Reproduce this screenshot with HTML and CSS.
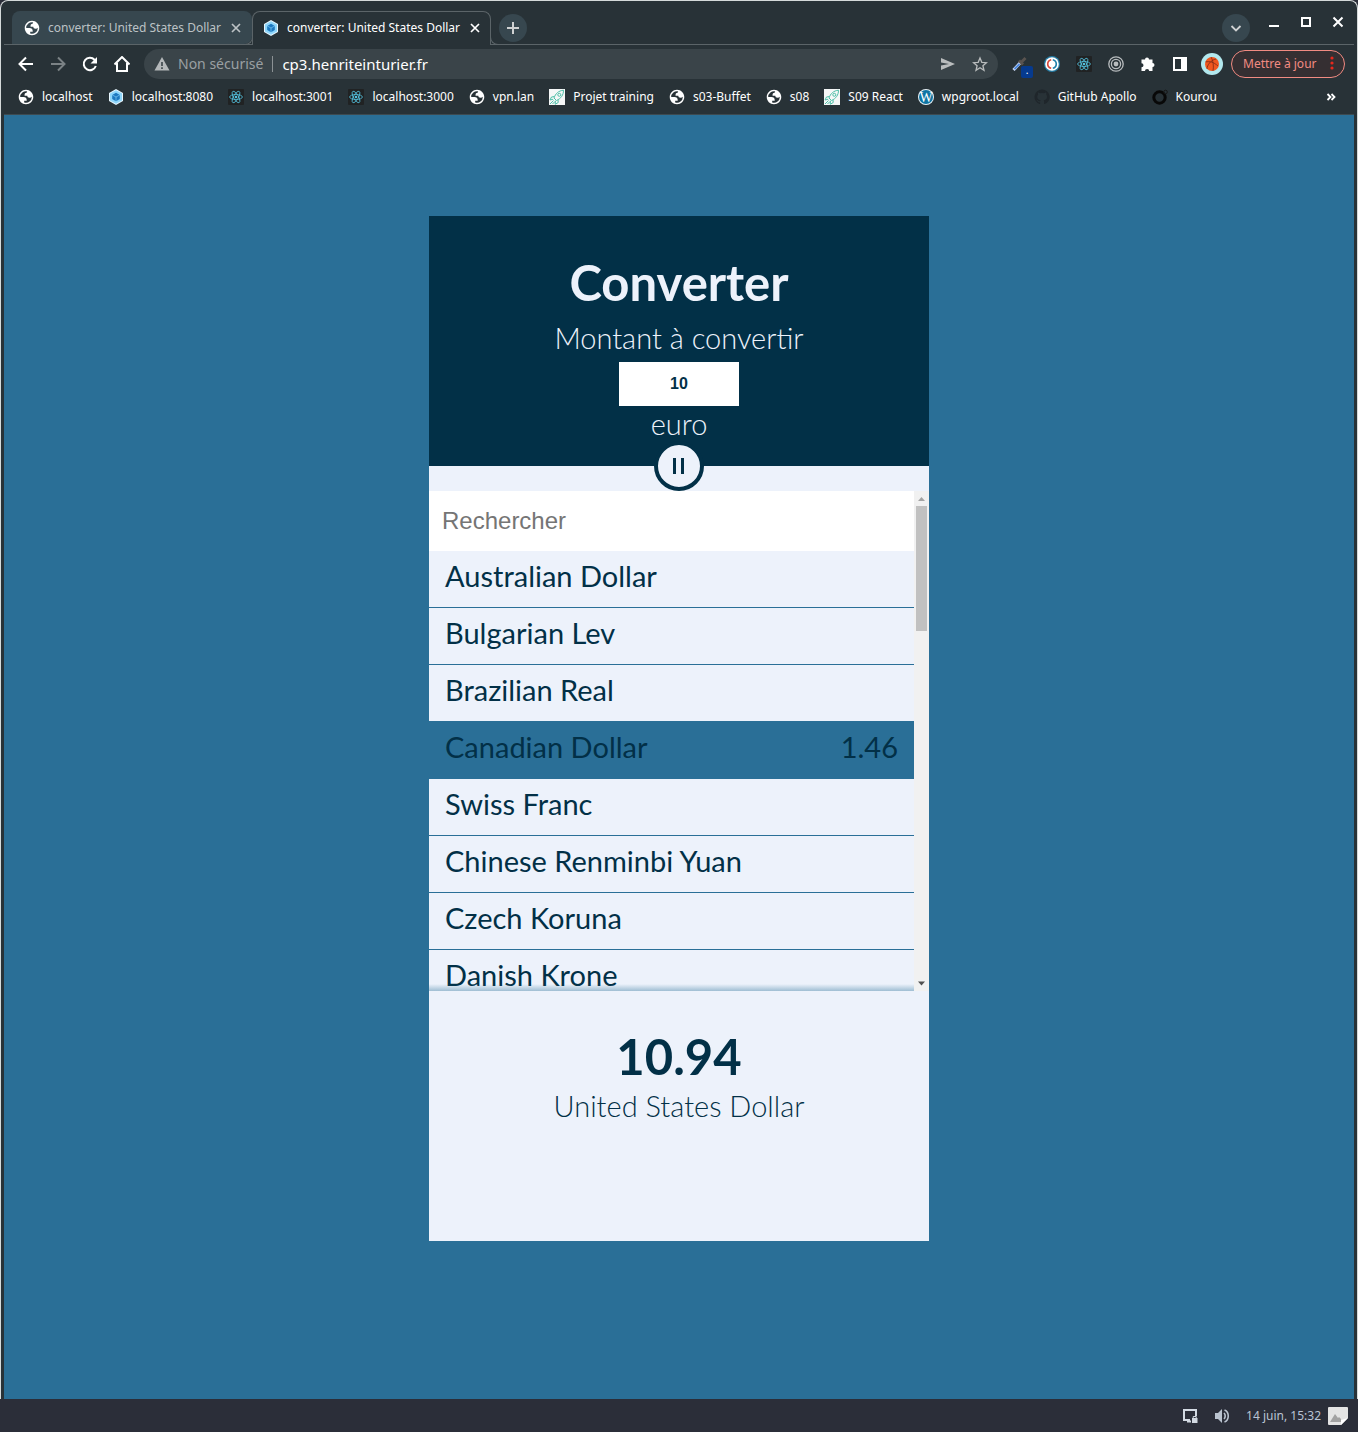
FILE: index.html
```html
<!DOCTYPE html>
<html lang="fr">
<head>
<meta charset="utf-8">
<meta name="viewport" content="width=device-width, initial-scale=1">
<title>converter: United States Dollar</title>
<link rel="stylesheet" href="styles.css">
</head>
<body>
<svg class="defs" aria-hidden="true">
  <symbol id="globe" viewBox="1 1 22 22">
    <path d="M12 2C6.480 2 2 6.480 2 12s4.480 10 10 10 10-4.480 10-10S17.520 2 12 2zM4 12h4.400c3.407.022 4.922 1.730 4.543 5.127H9.488v2.470a8.004 8.004 0 0 0 10.498-8.083C19.327 12.504 18.332 13 17 13c-2.137 0-3.206-.916-3.206-2.750h-3.748c-.274-2.728.683-4.092 2.870-4.092 0-.975.327-1.597.811-1.970A8.004 8.004 0 0 0 4 12z" fill="#fff" fill-rule="evenodd"/>
  </symbol>
  <symbol id="webpack" viewBox="0 0 16 16">
    <path d="M8 0l7 4v8l-7 4-7-4V4z" fill="#e8f6fd"/>
    <path d="M8 1.200l6 3.400v6.800l-6 3.400-6-3.400V4.600z" fill="#8ed6fb"/>
    <path d="M8 3.800l3.800 2.100v4.200L8 12.200l-3.800-2.100V5.900z" fill="#1c78c0"/>
    <path d="M4.200 5.900L8 8l3.800-2.100M8 8v4.200" fill="none" stroke="#8ed6fb" stroke-width=".6"/>
  </symbol>
  <symbol id="react" viewBox="0 0 16 16">
    <rect width="16" height="16" rx="1" fill="#202223"/>
    <g fill="none" stroke="#53c1de" stroke-width=".8">
      <ellipse cx="8" cy="8" rx="6.400" ry="2.500"/>
      <ellipse cx="8" cy="8" rx="6.400" ry="2.500" transform="rotate(60 8 8)"/>
      <ellipse cx="8" cy="8" rx="6.400" ry="2.500" transform="rotate(120 8 8)"/>
    </g>
    <circle cx="8" cy="8" r="1.300" fill="#53c1de"/>
  </symbol>
  <symbol id="rocket" viewBox="0 0 16 16">
    <rect width="16" height="16" fill="#f5f7f7"/>
    <path d="M5 9C6.500 4.500 9.500 1.800 14.500 1.200 14.500 6 12 9.500 7.500 11.500zM5.500 7.500L2.500 8 1 11l3.200-.8M9 10.800l.2 2.700-3 1.800.2-3.600M4.500 11.500L1 15M6 12.500L3.500 15" fill="none" stroke="#4dbfa8" stroke-width="1"/>
    <circle cx="10.300" cy="5.800" r="1.500" fill="none" stroke="#4dbfa8"/>
  </symbol>
  <symbol id="wordpress" viewBox="0 0 16 16">
    <circle cx="8" cy="8" r="8" fill="#e9f3f8"/>
    <circle cx="8" cy="8" r="7" fill="#0f74a3"/>
    <text x="8" y="12.500" text-anchor="middle" font-family="Liberation Serif, serif" font-size="14" fill="#fff">W</text>
  </symbol>
  <symbol id="github" viewBox="0 0 16 16">
    <path d="M8 .5a7.500 7.500 0 0 0-2.400 14.600c.4.1.5-.2.5-.4v-1.400c-2.100.5-2.500-1-2.500-1-.4-.9-.9-1.100-.9-1.100-.6-.5.1-.5.1-.5.8.1 1.200.8 1.200.8.700 1.200 1.800.8 2.200.6.100-.5.300-.8.500-1-1.700-.2-3.400-.8-3.400-3.700 0-.8.3-1.500.8-2-.1-.2-.4-1 .1-2 0 0 .6-.2 2.100.8a7 7 0 0 1 3.700 0c1.400-1 2.100-.8 2.100-.8.400 1 .1 1.800.1 2 .5.5.8 1.200.8 2 0 2.900-1.800 3.500-3.400 3.700.300.2.5.7.5 1.400v2.200c0 .2.100.5.500.4A7.500 7.500 0 0 0 8 .5z" fill="#1f262b"/>
  </symbol>
  <symbol id="close" viewBox="0 0 16 16">
    <path d="M4 4l8 8M12 4l-8 8" fill="none" stroke="currentColor" stroke-width="1.700"/>
  </symbol>
</svg>

<div class="window">
  <header class="chrome">
    <div class="tabs">
      <div class="tab">
        <svg class="icon"><use href="#globe"/></svg>
        <span class="tab-title">converter: United States Dollar</span>
        <button class="tab-close" aria-label="Fermer l'onglet"><svg class="icon"><use href="#close"/></svg></button>
      </div>
      <div class="tab tab-active">
        <svg class="icon"><use href="#webpack"/></svg>
        <span class="tab-title">converter: United States Dollar</span>
        <button class="tab-close" aria-label="Fermer l'onglet"><svg class="icon"><use href="#close"/></svg></button>
      </div>
      <button class="round new-tab" aria-label="Nouvel onglet"><svg class="icon" viewBox="0 0 16 16"><path d="M8 2v12M2 8h12" fill="none" stroke="currentColor" stroke-width="2"/></svg></button>
      <div class="controls">
        <button class="round" aria-label="Rechercher dans les onglets"><svg class="icon" viewBox="0 0 16 16"><path d="M3.500 6L8 10.500 12.500 6" fill="none" stroke="currentColor" stroke-width="1.800"/></svg></button>
        <div class="window-buttons">
          <button class="control" aria-label="Réduire"><svg class="icon" viewBox="0 0 16 16"><path d="M3 12h10" stroke="currentColor" stroke-width="2"/></svg></button>
          <button class="control" aria-label="Agrandir"><svg class="icon" viewBox="0 0 16 16"><path d="M4 4h8v8H4z" fill="none" stroke="currentColor" stroke-width="2"/></svg></button>
          <button class="control" aria-label="Fermer"><svg class="icon" viewBox="0 0 16 16"><path d="M3.500 3.500l9 9M12.500 3.500l-9 9" stroke="currentColor" stroke-width="2"/></svg></button>
        </div>
      </div>
    </div>

    <div class="toolbar">
      <button class="tool" aria-label="Précédent"><svg class="icon" viewBox="0 0 16 16"><path d="M15 8H2M8 1.500L1.500 8 8 14.500" fill="none" stroke="currentColor" stroke-width="2"/></svg></button>
      <button class="tool tool-off" aria-label="Suivant"><svg class="icon" viewBox="0 0 16 16"><path d="M1 8h13M8 1.500L14.500 8 8 14.500" fill="none" stroke="currentColor" stroke-width="2"/></svg></button>
      <button class="tool" aria-label="Actualiser"><svg class="icon" viewBox="0 0 16 16"><path d="M13.800 10A6.200 6.200 0 1 1 12.500 3.700L14 5.200" fill="none" stroke="currentColor" stroke-width="2"/><path d="M15 1v6.500H8.500z" fill="currentColor"/></svg></button>
      <button class="tool" aria-label="Accueil"><svg class="icon" viewBox="0 0 16 16"><path d="M.5 8.500L8 1l7.500 7.500M3 7v8h10V7" fill="none" stroke="currentColor" stroke-width="2"/></svg></button>
      <div class="omnibox">
        <svg class="icon warn" viewBox="0 0 16 16"><path d="M8 1l7.500 13.500H.5z" fill="#b4b8ba"/><path d="M8 6v4M8 11.300v1.700" stroke="#3a4449" stroke-width="1.600"/></svg>
        <span class="insecure">Non sécurisé</span>
        <input class="url" type="text" value="cp3.henriteinturier.fr" aria-label="Adresse">
        <button class="tool tool-soft" aria-label="Partager"><svg class="icon" viewBox="0 0 16 16"><path d="M1 2l14 6-14 6V9.500L9 8 1 6.500z" fill="currentColor"/></svg></button>
        <button class="tool tool-soft" aria-label="Ajouter aux favoris"><svg class="icon" viewBox="0 0 16 16"><path d="M8 2l1.800 4.300 4.700.4-3.600 3 1.100 4.600-4-2.500-4 2.500 1.100-4.600-3.600-3 4.700-.4z" fill="none" stroke="currentColor" stroke-width="1.300"/></svg></button>
      </div>
      <div class="extensions">
        <button class="tool picker" aria-label="Pipette"><svg class="icon" viewBox="0 0 16 16"><path d="M1.500 14L8.500 6.500" stroke="#c9d8f4" stroke-width="3"/><path d="M2.500 13L7.500 8" stroke="#4b87dd" stroke-width="1.800"/><path d="M7 4.500L11 8.500M9 6.500L13.500 2" stroke="#59534f" stroke-width="3"/></svg><span class="badge">.</span></button>
        <button class="tool" aria-label="Synchronisation"><svg class="icon" viewBox="0 0 16 16"><circle cx="8" cy="8" r="8" fill="#247ca5"/><circle cx="8" cy="8" r="6.800" fill="#fff"/><path d="M8.800 3.700a4.400 4.400 0 0 1 0 8.600" fill="none" stroke="#1d7faa" stroke-width="1.600"/><path d="M7.200 12.300a4.400 4.400 0 0 1 0-8.600" fill="none" stroke="#d84538" stroke-width="1.600"/></svg></button>
        <button class="tool" aria-label="React"><svg class="icon"><use href="#react"/></svg></button>
        <button class="tool" aria-label="Cible"><svg class="icon" viewBox="0 0 16 16"><g fill="none" stroke="#b8bcbe" stroke-width="1.300"><circle cx="8" cy="8" r="7.200"/><circle cx="8" cy="8" r="4.600"/></g><circle cx="8" cy="8" r="2.400" fill="#b8bcbe"/></svg></button>
        <button class="tool" aria-label="Extensions"><svg class="icon" viewBox="0 0 16 16"><path d="M1.500 3.500H5a2 2 0 1 1 4 0h3.500V7a2 2 0 1 1 0 4v4H9.200a2.100 2.100 0 0 0-4.200 0H1.500v-3.800a2 2 0 0 0 0-4z" fill="#fff"/></svg></button>
        <button class="tool" aria-label="Panneau latéral"><svg class="icon" viewBox="0 0 16 16"><path d="M1 1h14v14H1zM3 3v10h6V3z" fill="#fff" fill-rule="evenodd"/></svg></button>
        <button class="tool" aria-label="Profil"><svg class="avatar" viewBox="0 0 22 22"><circle cx="11" cy="11" r="11" fill="#b2e8ee"/><circle cx="11" cy="11" r="7" fill="#f0571e"/><path d="M4.500 9c4-1 8 0 12.500 4M10 4c2 3 3 9 2 14M6 16c0-4 4-9 9-10" fill="none" stroke="#7d2b16" stroke-width=".8"/></svg></button>
      </div>
      <button class="update">Mettre à jour
        <svg class="dots" viewBox="0 0 4 16"><g fill="#e8291c"><circle cx="2" cy="3" r="1.600"/><circle cx="2" cy="8" r="1.600"/><circle cx="2" cy="13" r="1.600"/></g></svg>
      </button>
    </div>

    <nav class="bookmarks" aria-label="Favoris">
      <a class="bookmark" href="#"><svg class="icon"><use href="#globe"/></svg>localhost</a>
      <a class="bookmark" href="#"><svg class="icon"><use href="#webpack"/></svg>localhost:8080</a>
      <a class="bookmark" href="#"><svg class="icon"><use href="#react"/></svg>localhost:3001</a>
      <a class="bookmark" href="#"><svg class="icon"><use href="#react"/></svg>localhost:3000</a>
      <a class="bookmark" href="#"><svg class="icon"><use href="#globe"/></svg>vpn.lan</a>
      <a class="bookmark" href="#"><svg class="icon"><use href="#rocket"/></svg>Projet training</a>
      <a class="bookmark" href="#"><svg class="icon"><use href="#globe"/></svg>s03-Buffet</a>
      <a class="bookmark" href="#"><svg class="icon"><use href="#globe"/></svg>s08</a>
      <a class="bookmark" href="#"><svg class="icon"><use href="#rocket"/></svg>S09 React</a>
      <a class="bookmark" href="#"><svg class="icon"><use href="#wordpress"/></svg>wpgroot.local</a>
      <a class="bookmark" href="#"><svg class="icon"><use href="#github"/></svg>GitHub Apollo</a>
      <a class="bookmark" href="#"><svg class="icon" viewBox="0 0 16 16"><circle cx="7.500" cy="8.500" r="5.700" fill="none" stroke="#080808" stroke-width="3"/><circle cx="13.500" cy="3" r="1.800" fill="none" stroke="#171717"/></svg>Kourou</a>
      <button class="tool more" aria-label="Autres favoris"><svg class="icon" viewBox="0 0 16 16"><path d="M4.500 5l3 3-3 3M8.500 5l3 3-3 3" fill="none" stroke="currentColor" stroke-width="1.800"/></svg></button>
    </nav>
  </header>

  <main class="page">
    <div class="card">
      <section class="amount">
        <h1 class="title">Converter</h1>
        <label class="subtitle" for="amount">Montant à convertir</label>
        <input class="amount-input" id="amount" type="text" inputmode="numeric" value="10">
        <p class="subtitle">euro</p>
      </section>
      <button class="toggle" aria-label="Masquer les devises"><span class="bar"></span><span class="bar"></span></button>
      <section class="currencies">
        <div class="list">
          <input class="search" type="text" placeholder="Rechercher" aria-label="Rechercher">
          <ul class="rows">
            <li class="row">Australian Dollar</li>
            <li class="row">Bulgarian Lev</li>
            <li class="row">Brazilian Real</li>
            <li class="row row-hover">Canadian Dollar<span>1.46</span></li>
            <li class="row">Swiss Franc</li>
            <li class="row">Chinese Renminbi Yuan</li>
            <li class="row">Czech Koruna</li>
            <li class="row">Danish Krone</li>
          </ul>
        </div>
        <div class="scrollbar" aria-hidden="true">
          <svg class="arrow" viewBox="0 0 15 15"><path d="M4 10l3.500-4L11 10z" fill="#a3a3a3"/></svg>
          <div class="thumb"></div>
          <svg class="arrow" viewBox="0 0 15 15"><path d="M4 5.500l3.500 4 3.500-4z" fill="#505050"/></svg>
        </div>
      </section>
      <section class="result">
        <p class="value">10.94</p>
        <p class="currency">United States Dollar</p>
      </section>
    </div>
  </main>
</div>

<footer class="taskbar">
  <svg class="icon" viewBox="0 0 16 16"><path d="M8 12H2V2h12v6" fill="none" stroke="#d3dae3" stroke-width="2"/><path d="M5 13.500h4" stroke="#d3dae3" stroke-width="2"/><path d="M10 10h5.500v5H10z" fill="#d3dae3"/><path d="M11.200 10V8.500h3V10" fill="none" stroke="#d3dae3"/></svg>
  <svg class="icon" viewBox="0 0 16 16"><path d="M1 5h3l4-4v14l-4-4H1z" fill="#bac3cf"/><path d="M10 5c1.600 1.500 1.600 4.500 0 6M10.500 2c5 2 5 10 0 12" fill="none" stroke="#bac3cf" stroke-width="1.600"/></svg>
  <time class="clock">14 juin, 15:32</time>
  <svg class="picture" viewBox="0 0 20 18"><path d="M1 0h18a1 1 0 0 1 1 1v10l-7 7H1a1 1 0 0 1-1-1V1a1 1 0 0 1 1-1z" fill="#e4e4e4"/><path d="M2 15l5-8 3 4 1-1 2 2v3z" fill="#a2a2a2"/><path d="M13 18v-5l7-2z" fill="#fff"/></svg>
</footer>
</body>
</html>
```
FILE: styles.css
```css
* {
  box-sizing: border-box;
}

body {
  margin: 0;
  min-height: 100vh;
  display: flex;
  flex-direction: column;
  background: #2b2e39;
  font-family: "Noto Sans", sans-serif;
  font-size: 12px;
}

button,
input {
  border: 0;
  padding: 0;
  margin: 0;
  background: none;
  font: inherit;
  color: inherit;
}

h1,
p,
ul {
  margin: 0;
  padding: 0;
}

.defs {
  display: none;
}

.icon {
  width: 16px;
  height: 16px;
  flex: none;
  display: block;
}

.window {
  flex: 1;
  display: flex;
  flex-direction: column;
  padding: 0 3px;
  background: #283237;
  border: 1px solid #d5dada;
  border-bottom: 0;
  border-radius: 8px 8px 0 0;
}

/* Browser chrome */
.chrome {
  color: #fff;
}

.tabs {
  display: flex;
  height: 44px;
  padding: 10px 0 0 8px;
  border-bottom: 1px solid #5b6468;
}

.tab {
  position: relative;
  display: flex;
  align-items: center;
  width: 240px;
  height: 33px;
  padding: 0 8px 0 12px;
  background: #37474f;
  border-radius: 8px 8px 8px 0;
  color: #bcc2c5;
}

.tab-active {
  width: 239px;
  height: 34px;
  padding: 0 7px 2px 10px;
  background: #283237;
  border: 1px solid #5b6468;
  border-bottom: 0;
  border-radius: 8px 8px 0 0;
  color: #fff;
}

/* Curved feet joining the active tab to the strip's bottom line */
.tab-active::before,
.tab-active::after {
  content: "";
  position: absolute;
  bottom: 0;
  width: 8px;
  height: 8px;
  border: 1px solid #5b6468;
  border-top: 0;
}

.tab-active::before {
  right: 100%;
  border-left: 0;
  border-radius: 0 0 8px 0;
}

.tab-active::after {
  left: 100%;
  border-right: 0;
  border-radius: 0 0 0 8px;
}

.tab-title {
  flex: 1;
  margin-left: 8px;
  white-space: nowrap;
}

.round {
  display: flex;
  align-items: center;
  justify-content: center;
  width: 28px;
  height: 28px;
  border-radius: 50%;
  background: #37474f;
  color: #d0d2d3;
}

.new-tab {
  margin: 3px 0 0 8px;
}

.controls {
  display: flex;
  margin-left: auto;
  padding-top: 3px;
}

.window-buttons {
  display: flex;
  align-items: flex-start;
  gap: 16px;
  padding: 0 8px 0 16px;
}

.control {
  color: #fff;
}

.toolbar {
  display: flex;
  align-items: center;
  height: 38px;
  padding: 0 9px 0 6px;
}

.tool {
  display: flex;
  align-items: center;
  justify-content: center;
  flex: none;
  width: 32px;
  height: 30px;
  color: #fff;
}

.tool-off {
  color: #7b8285;
}

.tool-soft {
  color: #b9bcbd;
}

.omnibox {
  flex: 1;
  min-width: 0;
  display: flex;
  align-items: center;
  height: 30px;
  margin: 0 6px;
  padding: 0 2px 0 10px;
  border-radius: 15px;
  background: #3a4449;
  font-size: 14px;
}

.insecure {
  margin-left: 8px;
  padding-right: 9px;
  border-right: 1px solid #8b9194;
  line-height: 16px;
  color: #9aa0a3;
  white-space: nowrap;
}

.url {
  flex: 1;
  min-width: 0;
  height: 20px;
  margin-left: 9px;
  font-size: 15px;
  color: #fff;
}

.extensions {
  display: flex;
}

.picker {
  position: relative;
}

.badge {
  position: absolute;
  right: 3px;
  bottom: 1px;
  width: 12px;
  height: 12px;
  border-radius: 2px;
  background: #063a8e;
  font-size: 10px;
  line-height: 8px;
}

.avatar {
  width: 22px;
  height: 22px;
}

.update {
  display: flex;
  align-items: center;
  justify-content: space-between;
  width: 114px;
  height: 28px;
  margin-left: 3px;
  padding: 0 10px 2px 11px;
  border: 1px solid #f28b82;
  border-radius: 14px;
  background: #352f32;
  color: #f28b82;
  white-space: nowrap;
}

.dots {
  width: 4px;
  height: 16px;
}

.bookmarks {
  display: flex;
  align-items: center;
  gap: 15px;
  height: 32px;
  padding: 0 7px 4px 14px;
  border-bottom: 1px solid #3d4a50;
  overflow: hidden;
}

.bookmark {
  display: flex;
  align-items: center;
  gap: 8px;
  color: #fff;
  text-decoration: none;
  white-space: nowrap;
}

.more {
  margin-left: auto;
}

/* Converter page */
.page {
  flex: 1;
  padding: 101px 16px;
  background: #2a6f97;
  color: #023047;
  font-family: Lato, sans-serif;
}

.card {
  max-width: 500px;
  margin: 0 auto;
  background: #edf2fb;
}

.amount {
  display: flex;
  flex-direction: column;
  align-items: center;
  height: 250px;
  padding-top: 34px;
  background: #023047;
  color: #edf2fb;
}

.title {
  font-size: 49px;
  line-height: 64px;
  font-weight: 700;
}

.subtitle {
  margin-top: 6px;
  font-size: 29px;
  line-height: 36px;
  font-weight: 300;
}

.amount-input {
  width: 120px;
  height: 44px;
  margin-top: 6px;
  background: #fff;
  color: #023047;
  font: bold 16px "Liberation Sans", sans-serif;
  text-align: center;
}

.amount .amount-input + .subtitle {
  margin-top: 0;
}

.toggle {
  position: relative;
  display: flex;
  align-items: center;
  justify-content: center;
  gap: 5px;
  width: 50px;
  height: 50px;
  margin: -25px auto 0;
  padding-right: 1px;
  border: 4px solid #023047;
  border-radius: 50%;
  background: #edf2fb;
}

.bar {
  width: 3px;
  height: 16px;
  background: #023047;
}

.currencies {
  display: flex;
  height: 500px;
}

.list {
  flex: 1;
  min-width: 0;
  position: relative;
  overflow: hidden;
}

.list::after {
  content: "";
  position: absolute;
  inset: auto 0 0;
  height: 7px;
  background: linear-gradient(transparent, #2a6f9766);
}

.search {
  display: block;
  width: 100%;
  height: 60px;
  padding: 0 13px;
  background: #fff;
  font: 24px "Liberation Sans", sans-serif;
}

.search::placeholder {
  color: #757575;
}

.rows {
  list-style: none;
}

.row {
  display: flex;
  justify-content: space-between;
  height: 57px;
  padding: 9px 16px 0;
  border-bottom: 1px solid #2a6f97;
  font-size: 29px;
  line-height: 32px;
}

.row-hover {
  background: #2a6f97;
}

.scrollbar {
  display: flex;
  flex-direction: column;
  width: 15px;
  background: #f1f1f1;
}

.arrow {
  width: 15px;
  height: 15px;
}

.thumb {
  width: 11px;
  height: 125px;
  margin: 0 2px auto;
  background: #c1c1c1;
}

.result {
  height: 250px;
  padding-top: 33px;
  text-align: center;
}

.value {
  font-size: 49px;
  line-height: 64px;
  font-weight: 700;
}

.currency {
  font-size: 29px;
  line-height: 36px;
  font-weight: 300;
}

/* Desktop panel */
.taskbar {
  display: flex;
  align-items: center;
  justify-content: flex-end;
  gap: 16px;
  height: 33px;
  padding-right: 10px;
  background: #2b2e39;
  color: #b9c4d4;
}

.clock {
  margin-right: -9px;
}

.picture {
  width: 20px;
  height: 18px;
}
```
